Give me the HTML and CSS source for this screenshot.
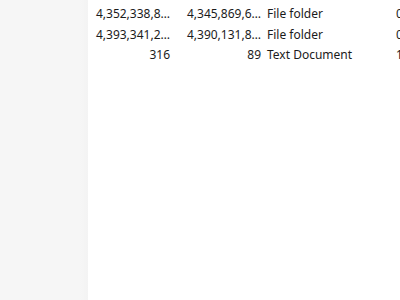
FILE: index.html
```html
<!DOCTYPE html>
<html lang="en">
<head>
  <meta charset="UTF-8">
  <title>Files</title>
  <link rel="stylesheet" href="styles.css">
</head>
<body>
  <aside class="nav-pane"></aside>

  <main class="file-list">
    <div class="row">
      <span class="cell size">4,352,338,8…</span>
      <span class="cell size alloc">4,345,869,6…</span>
      <span class="cell type">File folder</span>
      <span class="cell date">0</span>
    </div>
    <div class="row">
      <span class="cell size">4,393,341,2…</span>
      <span class="cell size alloc">4,390,131,8…</span>
      <span class="cell type">File folder</span>
      <span class="cell date">0</span>
    </div>
    <div class="row">
      <span class="cell size">316</span>
      <span class="cell size alloc">89</span>
      <span class="cell type">Text Document</span>
      <span class="cell date">1</span>
    </div>
  </main>
</body>
</html>
```

FILE: styles.css
```css
body {
  margin: 0;
  height: 300px;
  overflow: hidden;
  display: flex;
  font-family: 'Noto Sans', 'Segoe UI', sans-serif;
  font-size: 12px;
  color: #1b1b1b;
  background: #fff;
}

.nav-pane {
  width: 88px;
  flex-shrink: 0;
  background: linear-gradient(to right, #f6f6f6 80px, #f3f3f3 88px);
}

.file-list {
  flex: 1;
  padding-top: 3px;
}

.row {
  display: grid;
  grid-template-columns: 88px 90px 130px 1fr;
  height: 20.5px;
  line-height: 21px;
  white-space: nowrap;
}

.cell {
  overflow: hidden;
}

.size {
  text-align: right;
  padding-right: 6px;
}

.alloc {
  padding-right: 5px;
}

.type {
  padding-left: 1px;
}
```
